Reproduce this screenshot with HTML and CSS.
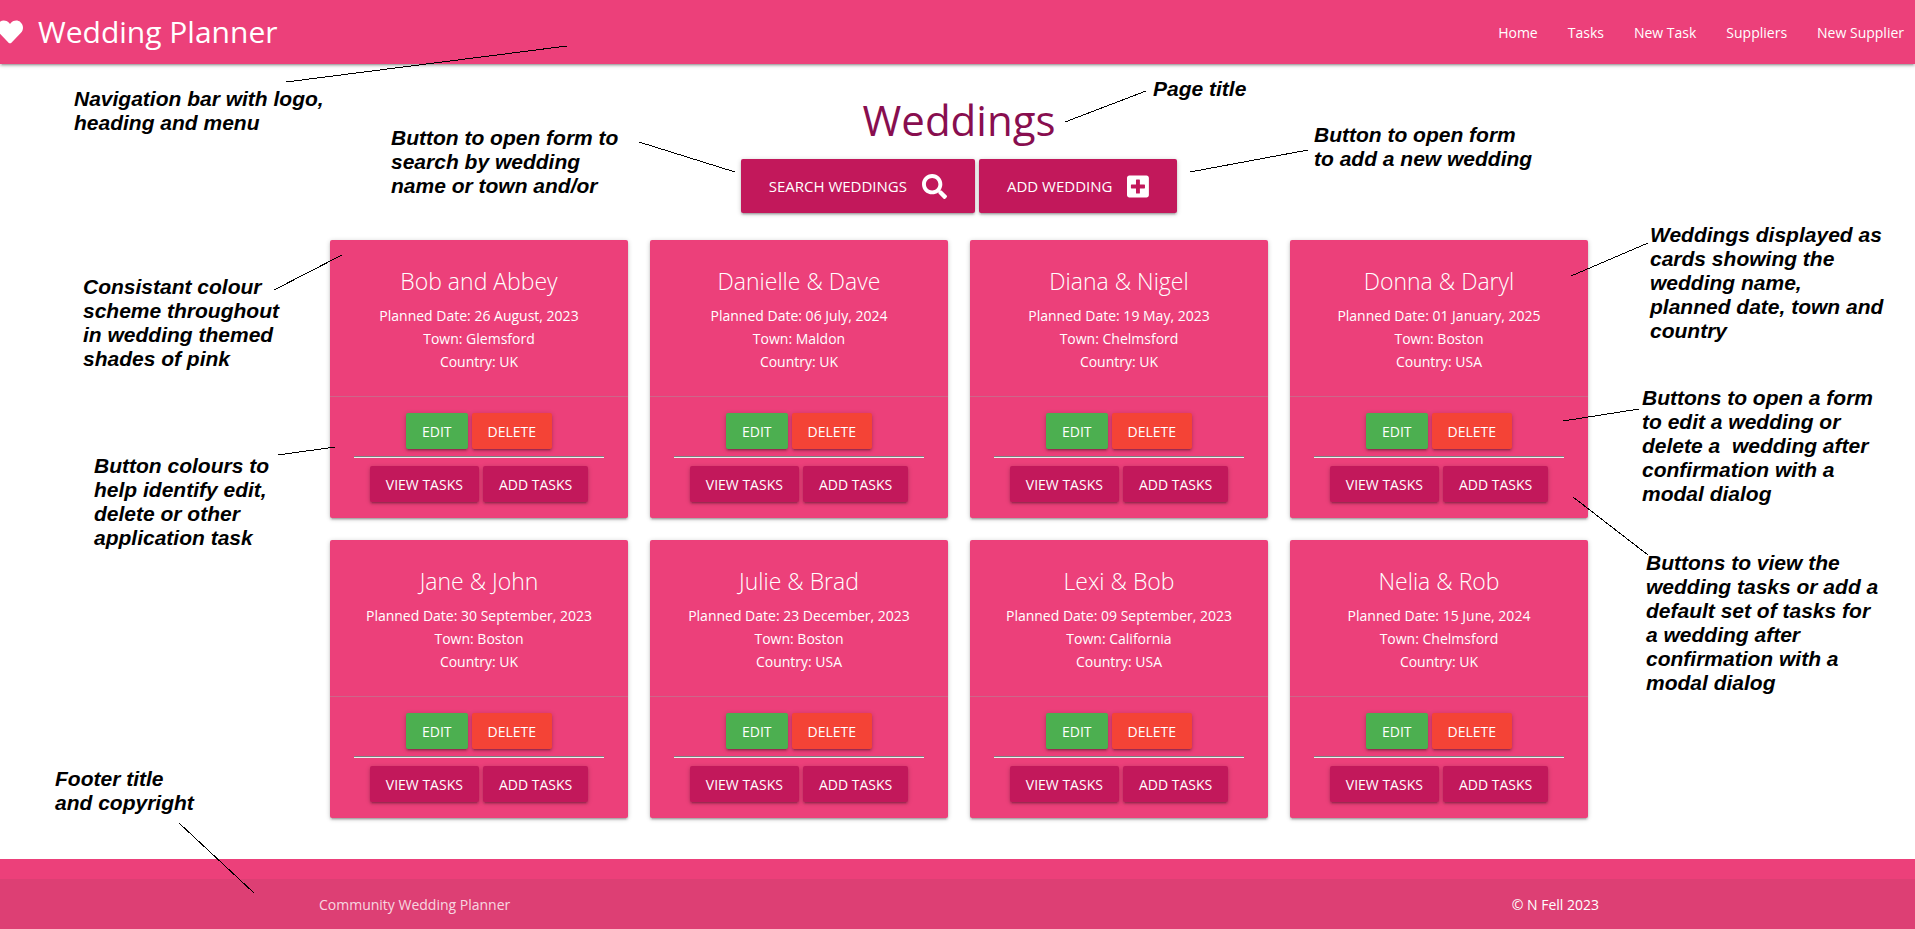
FILE: index.html
```html
<!DOCTYPE html>
<html lang="en">
<head>
<meta charset="utf-8">
<title>Wedding Planner</title>
<meta name="viewport" content="width=device-width, initial-scale=1">
<link rel="stylesheet" href="styles.css">
</head>
<body>
<header class="navbar">
  <a class="brand" href="#"><svg class="heart" viewBox="0 0 512 512" aria-hidden="true"><path d="M462.3 62.600c-54.800-46.700-136.300-38.300-186.600 13.600L256 96.500l-19.700-20.300C186.100 24.300 104.500 15.900 49.700 62.600c-62.800 53.600-66.100 149.800-9.900 207.900l193.500 199.800c12.500 12.900 32.800 12.900 45.300 0l193.500-199.800c56.300-58.100 53-154.300-9.800-207.900z"/></svg><span>Wedding Planner</span></a>
  <nav class="menu">
    <a href="#">Home</a>
    <a href="#">Tasks</a>
    <a href="#">New Task</a>
    <a href="#">Suppliers</a>
    <a href="#">New Supplier</a>
  </nav>
</header>

<main class="page">
  <h1 class="page-title">Weddings</h1>
  <div class="toolbar">
    <button class="btn btn-large" type="button">Search Weddings<svg class="icon" viewBox="0 0 512 512" aria-hidden="true"><path d="M505 442.700L405.300 343c-4.500-4.500-10.600-7-17-7H372c27.600-35.300 44-79.700 44-128C416 93.100 322.900 0 208 0S0 93.100 0 208s93.100 208 208 208c48.300 0 92.700-16.400 128-44v16.300c0 6.400 2.500 12.500 7 17l99.700 99.700c9.400 9.400 24.600 9.400 33.900 0l28.300-28.300c9.400-9.400 9.400-24.600.1-34zM208 336c-70.700 0-128-57.200-128-128 0-70.700 57.200-128 128-128 70.700 0 128 57.200 128 128 0 70.700-57.200 128-128 128z"/></svg></button>
    <button class="btn btn-large" type="button">Add Wedding<svg class="icon" viewBox="0 0 448 512" aria-hidden="true"><path d="M400 32H48C21.500 32 0 53.500 0 80v352c0 26.500 21.500 48 48 48h352c26.500 0 48-21.500 48-48V80c0-26.500-21.500-48-48-48zm-32 252c0 6.600-5.400 12-12 12h-92v92c0 6.600-5.400 12-12 12h-56c-6.600 0-12-5.400-12-12v-92H92c-6.600 0-12-5.400-12-12v-56c0-6.600 5.400-12 12-12h92v-92c0-6.600 5.400-12 12-12h56c6.600 0 12 5.400 12 12v92h92c6.600 0 12 5.400 12 12v56z"/></svg></button>
  </div>

  <section class="cards" aria-label="Weddings">
    <article class="card">
      <div class="card-content"><h2>Bob and Abbey</h2><p>Planned Date: 26 August, 2023<br>Town: Glemsford<br>Country: UK</p></div>
      <div class="card-action">
        <div class="row"><button class="btn edit" type="button">Edit</button><button class="btn delete" type="button">Delete</button></div>
        <hr>
        <div class="row"><button class="btn" type="button">View Tasks</button><button class="btn" type="button">Add Tasks</button></div>
      </div>
    </article>
    <article class="card">
      <div class="card-content"><h2>Danielle &amp; Dave</h2><p>Planned Date: 06 July, 2024<br>Town: Maldon<br>Country: UK</p></div>
      <div class="card-action">
        <div class="row"><button class="btn edit" type="button">Edit</button><button class="btn delete" type="button">Delete</button></div>
        <hr>
        <div class="row"><button class="btn" type="button">View Tasks</button><button class="btn" type="button">Add Tasks</button></div>
      </div>
    </article>
    <article class="card">
      <div class="card-content"><h2>Diana &amp; Nigel</h2><p>Planned Date: 19 May, 2023<br>Town: Chelmsford<br>Country: UK</p></div>
      <div class="card-action">
        <div class="row"><button class="btn edit" type="button">Edit</button><button class="btn delete" type="button">Delete</button></div>
        <hr>
        <div class="row"><button class="btn" type="button">View Tasks</button><button class="btn" type="button">Add Tasks</button></div>
      </div>
    </article>
    <article class="card">
      <div class="card-content"><h2>Donna &amp; Daryl</h2><p>Planned Date: 01 January, 2025<br>Town: Boston<br>Country: USA</p></div>
      <div class="card-action">
        <div class="row"><button class="btn edit" type="button">Edit</button><button class="btn delete" type="button">Delete</button></div>
        <hr>
        <div class="row"><button class="btn" type="button">View Tasks</button><button class="btn" type="button">Add Tasks</button></div>
      </div>
    </article>
    <article class="card">
      <div class="card-content"><h2>Jane &amp; John</h2><p>Planned Date: 30 September, 2023<br>Town: Boston<br>Country: UK</p></div>
      <div class="card-action">
        <div class="row"><button class="btn edit" type="button">Edit</button><button class="btn delete" type="button">Delete</button></div>
        <hr>
        <div class="row"><button class="btn" type="button">View Tasks</button><button class="btn" type="button">Add Tasks</button></div>
      </div>
    </article>
    <article class="card">
      <div class="card-content"><h2>Julie &amp; Brad</h2><p>Planned Date: 23 December, 2023<br>Town: Boston<br>Country: USA</p></div>
      <div class="card-action">
        <div class="row"><button class="btn edit" type="button">Edit</button><button class="btn delete" type="button">Delete</button></div>
        <hr>
        <div class="row"><button class="btn" type="button">View Tasks</button><button class="btn" type="button">Add Tasks</button></div>
      </div>
    </article>
    <article class="card">
      <div class="card-content"><h2>Lexi &amp; Bob</h2><p>Planned Date: 09 September, 2023<br>Town: California<br>Country: USA</p></div>
      <div class="card-action">
        <div class="row"><button class="btn edit" type="button">Edit</button><button class="btn delete" type="button">Delete</button></div>
        <hr>
        <div class="row"><button class="btn" type="button">View Tasks</button><button class="btn" type="button">Add Tasks</button></div>
      </div>
    </article>
    <article class="card">
      <div class="card-content"><h2>Nelia &amp; Rob</h2><p>Planned Date: 15 June, 2024<br>Town: Chelmsford<br>Country: UK</p></div>
      <div class="card-action">
        <div class="row"><button class="btn edit" type="button">Edit</button><button class="btn delete" type="button">Delete</button></div>
        <hr>
        <div class="row"><button class="btn" type="button">View Tasks</button><button class="btn" type="button">Add Tasks</button></div>
      </div>
    </article>
  </section>
</main>

<footer class="footer">
  <div class="footer-copyright">
    <div class="container"><span class="footer-title">Community Wedding Planner</span><span>© N Fell 2023</span></div>
  </div>
</footer>

<svg class="pointers" aria-hidden="true">
  <path d="M286 82L567 46M639 142L735 172M1065 122L1146 91M1190 172L1308 150M274 290L342 255M278 455L335 447M1571 276L1648 243M1563 421L1639 409M1573 497L1648 555M179 823L254 893"/>
</svg>
<p class="note note-nav">Navigation bar with logo,
heading and menu</p>
<p class="note note-search">Button to open form to
search by wedding
name or town and/or</p>
<p class="note note-title">Page title</p>
<p class="note note-add">Button to open form
to add a new wedding</p>
<p class="note note-colour">Consistant colour
scheme throughout
in wedding themed
shades of pink</p>
<p class="note note-buttons">Button colours to
help identify edit,
delete or other
application task</p>
<p class="note note-cards">Weddings displayed as
cards showing the
wedding name,
planned date, town and
country</p>
<p class="note note-edit">Buttons to open a form
to edit a wedding or
delete a  wedding after
confirmation with a
modal dialog</p>
<p class="note note-tasks">Buttons to view the
wedding tasks or add a
default set of tasks for
a wedding after
confirmation with a
modal dialog</p>
<p class="note note-footer">Footer title
and copyright</p>
</body>
</html>
```

FILE: styles.css
```css
*, *::before, *::after { box-sizing: border-box; }

body {
  position: relative;
  display: flex;
  flex-direction: column;
  min-height: 100vh;
  margin: 0;
  background: #fff;
  color: #fff;
  font: 14px/23px "Open Sans", "Noto Sans", sans-serif;
  overflow-x: hidden;
}

a { color: inherit; text-decoration: none; }

.navbar {
  display: flex;
  justify-content: space-between;
  align-items: center;
  height: 64px;
  padding-right: 11px;
  background: #ec407a;
  box-shadow: 0 2px 2px 0 rgba(0, 0, 0, .14), 0 3px 1px -2px rgba(0, 0, 0, .12), 0 1px 5px 0 rgba(0, 0, 0, .2);
}

.brand {
  display: flex;
  align-items: center;
  gap: 15px;
  font-size: 30px;
  line-height: 66px;
}

.heart {
  width: 26px;
  height: 26px;
  margin-left: -3px;
  fill: #fff;
}

.menu { display: flex; gap: 30px; }

.page {
  flex: 1;
  padding-left: 3px;
}

.page-title {
  margin: 26px 0 10px;
  color: #880e4f;
  font-size: 42px;
  font-weight: 400;
  line-height: 59px;
  text-align: center;
}

.toolbar, .row {
  display: flex;
  justify-content: center;
  gap: 4px;
}

.btn {
  height: 36px;
  padding: 0 16px;
  border: 0;
  border-radius: 2px;
  background: #c2185b;
  box-shadow: 0 2px 2px 0 rgba(0, 0, 0, .14), 0 3px 1px -2px rgba(0, 0, 0, .12), 0 1px 5px 0 rgba(0, 0, 0, .2);
  color: #fff;
  font: inherit;
  text-transform: uppercase;
  cursor: pointer;
}

.btn-large {
  display: flex;
  align-items: center;
  gap: 15px;
  height: 54px;
  padding: 0 28px;
  font-size: 15px;
}

.icon { height: 25px; fill: #fff; }
.edit { background: #4caf50; }
.delete { background: #f44336; }

.cards {
  display: grid;
  grid-template-columns: repeat(4, 1fr);
  gap: 22px;
  max-width: 1258px;
  margin: 27px auto 41px;
}

.card {
  border-radius: 2px;
  background: #ec407a;
  box-shadow: 0 2px 2px 0 rgba(0, 0, 0, .14), 0 3px 1px -2px rgba(0, 0, 0, .12), 0 1px 5px 0 rgba(0, 0, 0, .2);
  text-align: center;
}

.card-content { padding: 25px 24px 23px; }

.card h2 {
  margin: 0 0 7px;
  font-size: 23px;
  font-weight: 300;
  line-height: 32px;
}

.card p { margin: 0; }

.card-action {
  padding: 16px 24px;
  border-top: 1px solid rgba(160, 160, 160, .4);
}

.card hr {
  margin: 7px 0 8px;
  border: 0;
  border-top: 1px solid #808080;
  border-bottom: 1px solid #eee;
}

.footer {
  padding-top: 20px;
  background: #ec407a;
}

.footer-copyright {
  padding: 14px 0 13px 3px;
  background: rgba(51, 51, 51, .08);
}

.container {
  display: flex;
  justify-content: space-between;
  max-width: 1280px;
  margin: 0 auto;
}

.footer-title { color: rgba(255, 255, 255, .8); }

.pointers {
  position: absolute;
  inset: 0;
  width: 100%;
  height: 100%;
  fill: none;
  stroke: #000;
  shape-rendering: crispEdges;
  pointer-events: none;
}

.note {
  position: absolute;
  margin: 0;
  color: #000;
  font: italic bold 21px/24px "Liberation Sans", Arial, sans-serif;
  white-space: pre;
}

.note-nav { left: 74px; top: 87px; }
.note-search { left: 391px; top: 126px; }
.note-title { left: 1153px; top: 77px; }
.note-add { left: 1314px; top: 123px; }
.note-colour { left: 83px; top: 275px; }
.note-buttons { left: 94px; top: 454px; }
.note-cards { left: 1650px; top: 223px; }
.note-edit { left: 1642px; top: 386px; }
.note-tasks { left: 1646px; top: 551px; }
.note-footer { left: 55px; top: 767px; }
```
